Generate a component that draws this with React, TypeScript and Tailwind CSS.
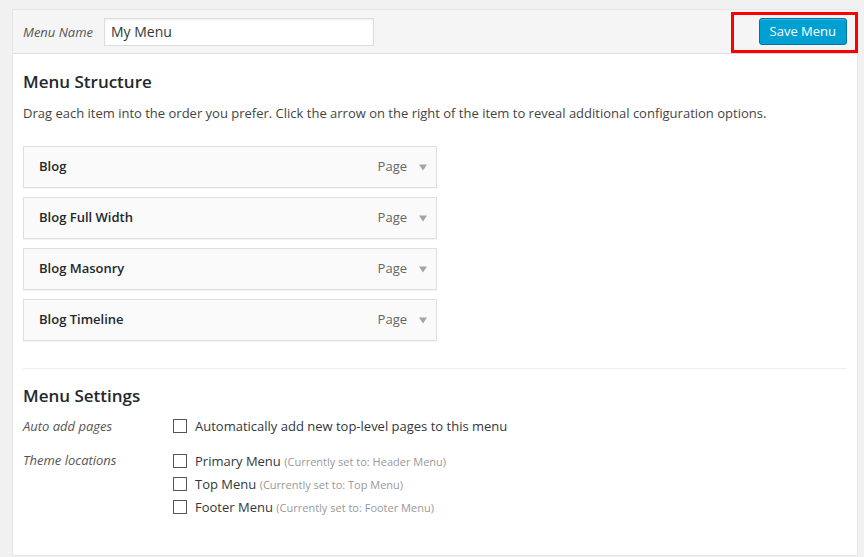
import React from 'react';

const items = ['Blog', 'Blog Full Width', 'Blog Masonry', 'Blog Timeline'];

const locations = [
  { name: 'Primary Menu', current: 'Header Menu' },
  { name: 'Top Menu', current: 'Top Menu' },
  { name: 'Footer Menu', current: 'Footer Menu' },
];

const Checkbox = () => (
  <span className="inline-block w-[14px] h-[14px] border border-[#555] bg-white shrink-0" />
);

export default function App() {
  return (
    <div
      className="w-full h-[557px] bg-[#f1f1f1] pt-[9px] pl-[12px] pr-[6px] text-[13px] text-[#444]"
      style={{ fontFamily: '"Open Sans", "Liberation Sans", sans-serif' }}
    >
      <div className="relative h-[547px] border border-[#e5e5e5] bg-white flex flex-col">
        {/* header */}
        <div className="h-[44px] bg-[#f5f5f5] border-b border-[#dedede] flex items-center pl-[10px] pr-[10px]">
          <span className="italic text-[#555] w-[81px] leading-[20px] mt-[1px]">Menu Name</span>
          <div className="w-[270px] h-[28px] border border-[#ddd] bg-white flex items-center px-[6px] text-[14px] text-[#32373c] shadow-[inset_0_1px_2px_rgba(0,0,0,0.07)]">
            My Menu
          </div>
          <div className="flex-1" />
          <button className="h-[27px] px-[10px] bg-[#00a0d2] border border-[#0073aa] rounded-[3px] text-white text-[13px] leading-none shadow-[inset_0_1px_0_rgba(120,200,230,0.5)]">
            Save Menu
          </button>
        </div>
        <div className="absolute left-[718px] top-[2px] w-[127px] h-[41px] border-[3px] border-[#ff0000] pointer-events-none" />

        {/* body */}
        <div className="px-[10px] flex-1">
          <h3 className="mt-[16px] text-[17px] leading-[24px] font-semibold text-[#23282d]">Menu Structure</h3>
          <p className="mt-[9px] leading-[20px]">
            Drag each item into the order you prefer. Click the arrow on the right of the item to reveal additional configuration options.
          </p>
          <div className="mt-[23px] flex flex-col gap-[9px] w-[414px]">
            {items.map((t) => (
              <div
                key={t}
                className="h-[42px] border border-[#dfdfdf] bg-[#fafafa] flex items-center pl-[15px] pr-[9px] shadow-[0_1px_1px_rgba(0,0,0,0.04)]"
              >
                <span className="font-semibold text-[#23282d] flex-1">{t}</span>
                <span className="text-[#666]">Page</span>
                <svg className="ml-[12px]" width="8" height="7" viewBox="0 0 8 7">
                  <path d="M0 0.5 H8 L4 6.5 Z" fill="#a0a5aa" />
                </svg>
              </div>
            ))}
          </div>
          <div className="mt-[27px] h-px bg-[#eee]" />
          <h3 className="mt-[15px] text-[17px] leading-[24px] font-semibold text-[#23282d]">Menu Settings</h3>
          <div className="mt-[8px] flex">
            <div className="w-[150px] italic text-[#555] leading-[20px]">Auto add pages</div>
            <label className="flex items-center gap-[8px] h-[20px]">
              <Checkbox />
              <span className="text-[#32373c] leading-[20px]">Automatically add new top-level pages to this menu</span>
            </label>
          </div>
          <div className="mt-[15px] flex">
            <div className="w-[150px] italic text-[#555] leading-[18px]">Theme locations</div>
            <div className="flex flex-col gap-[3px]">
              {locations.map((l) => (
                <label key={l.name} className="flex items-center gap-[8px] h-[20px]">
                  <Checkbox />
                  <span className="text-[#32373c] leading-[20px]">
                    {l.name}{' '}
                    <span className="text-[11px] leading-[20px] text-[#999]">(Currently set to: {l.current})</span>
                  </span>
                </label>
              ))}
            </div>
          </div>
        </div>
      </div>
    </div>
  );
}
